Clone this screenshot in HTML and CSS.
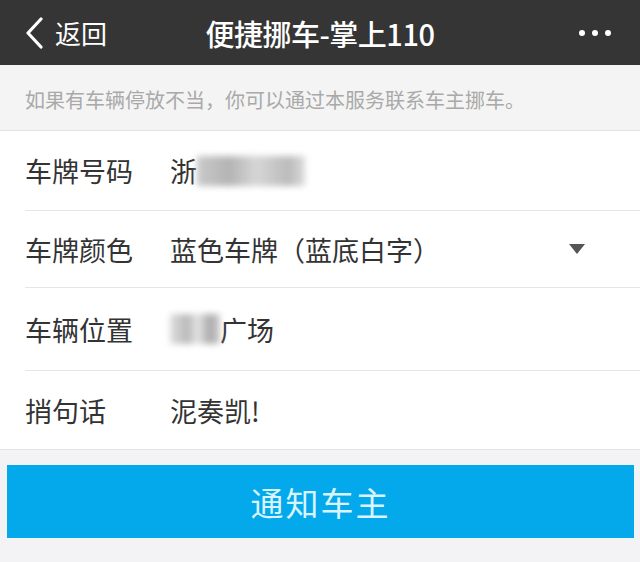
FILE: index.html
```html
<!DOCTYPE html>
<html lang="zh">
<head>
<meta charset="UTF-8">
<title>便捷挪车-掌上110</title>
<link rel="stylesheet" href="styles.css">
</head>
<body>
  <header class="cabecera">
    <a class="volver">
      <svg class="flecha" width="20" height="32" viewBox="0 0 20 32"><path d="M17 2 L4 16 L17 30" fill="none" stroke="#fff" stroke-width="3.2" stroke-linecap="round" stroke-linejoin="round"/></svg>
      <span>返回</span>
    </a>
    <h1 class="titulo">便捷挪车-掌上110</h1>
    <div class="mas"><i></i><i></i><i></i></div>
  </header>

  <p class="aviso">如果有车辆停放不当，你可以通过本服务联系车主挪车。</p>

  <section class="formulario">
    <div class="fila">
      <label>车牌号码</label>
      <div class="valor">浙<span class="borroso b1"></span></div>
    </div>
    <div class="fila">
      <label>车牌颜色</label>
      <div class="valor">蓝色车牌（蓝底白字）</div>
      <span class="triangulo"></span>
    </div>
    <div class="fila">
      <label>车辆位置</label>
      <div class="valor"><span class="borroso b2"></span>广场</div>
    </div>
    <div class="fila">
      <label>捎句话</label>
      <div class="valor">泥奏凯!</div>
    </div>
  </section>

  <div class="acciones">
    <button class="boton">通知车主</button>
  </div>
</body>
</html>
```

FILE: styles.css
```css
* {
  padding: 0;
  margin: 0;
  box-sizing: border-box;
}

body {
  background: #f3f3f5;
  font-family: "Noto Sans CJK SC", "Noto Sans", sans-serif;
  width: 640px;
  height: 562px;
  overflow: hidden;
}

.cabecera {
  height: 65px;
  background: #353535;
  display: flex;
  align-items: center;
  position: relative;
  color: #fff;
}

.volver {
  display: flex;
  align-items: center;
  padding-left: 24px;
  font-size: 26px;
  gap: 11px;
}

.titulo {
  position: absolute;
  left: 0;
  right: 0;
  text-align: center;
  font-size: 29px;
  font-weight: 500;
  letter-spacing: -0.5px;
  pointer-events: none;
}

.mas {
  margin-left: auto;
  margin-right: 29px;
  display: flex;
  gap: 7px;
}

.mas i {
  width: 6px;
  height: 6px;
  border-radius: 50%;
  background: #fff;
}

.aviso {
  height: 66px;
  line-height: 70px;
  padding-left: 25px;
  font-size: 20px;
  color: #a9a9a9;
  background: #f4f4f4;
  border-bottom: 1px solid #e3e3e3;
}

.formulario {
  background: #fff;
  border-bottom: 1px solid #e3e3e3;
}

.fila {
  display: flex;
  align-items: center;
  height: 80px;
  margin-left: 25px;
  border-bottom: 1px solid #e6e6e6;
  font-size: 27px;
  color: #333;
}

.fila:nth-child(2) { height: 77px; }
.fila:nth-child(3) { height: 83px; }
.fila:last-child {
  border-bottom: none;
  height: 78px;
}

.fila label {
  width: 145px;
}

.valor {
  display: flex;
  align-items: center;
}

.borroso {
  display: inline-block;
  height: 30px;
  filter: blur(3px);
}

.b1 {
  width: 108px;
  background: linear-gradient(90deg, #c9c9c9, #b4b4b4 30%, #d6d6d6 55%, #bbbbbb 85%, #dcdcdc);
}

.b2 {
  width: 50px;
  background: linear-gradient(90deg, #dedede, #b9b9b9 35%, #e6e6e6 55%, #a9a9a9 80%, #cfcfcf);
}

.triangulo {
  margin-left: auto;
  margin-right: 55px;
  width: 0;
  height: 0;
  border-left: 8px solid transparent;
  border-right: 8px solid transparent;
  border-top: 10px solid #555;
}

.acciones {
  padding: 15px 6px 0 7px;
}

.boton {
  width: 100%;
  height: 73px;
  border: none;
  background: #04a9ec;
  color: #d9f4ff;
  font-family: "Noto Sans CJK SC", sans-serif;
  font-size: 33px;
  letter-spacing: 2px;
}
```
